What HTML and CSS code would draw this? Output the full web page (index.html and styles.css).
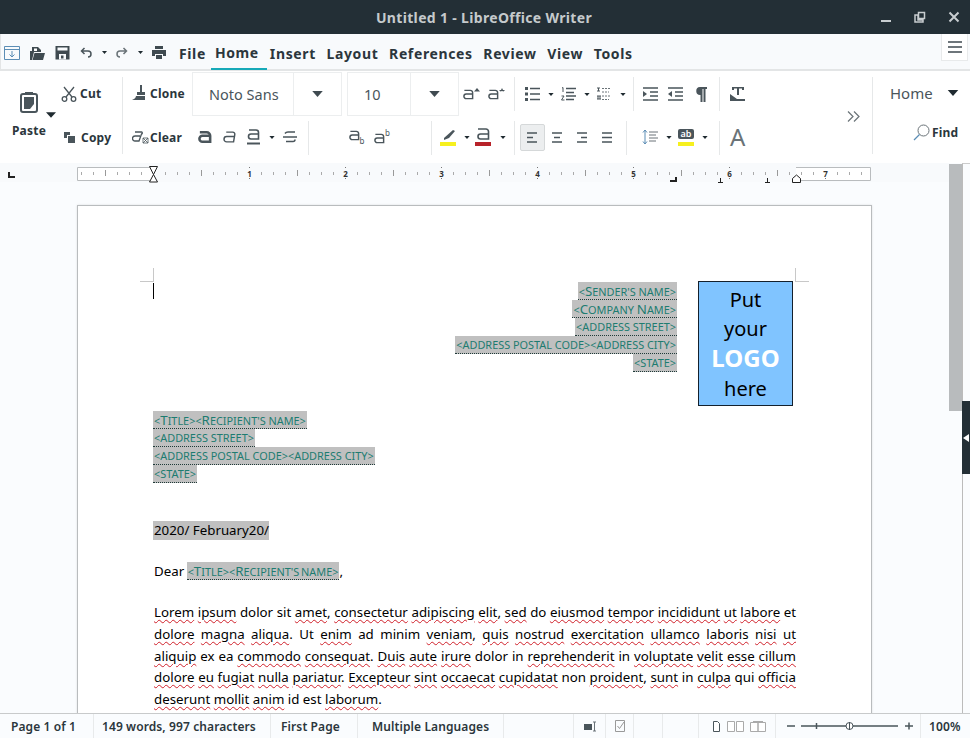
FILE: index.html
```
<!DOCTYPE html>
<html lang="en">
<head>
<meta charset="utf-8">
<title>Untitled 1 - LibreOffice Writer</title>
<link rel="stylesheet" href="styles.css">
</head>
<body>
<svg class="defs" width="0" height="0" aria-hidden="true">
  <symbol id="caret" viewBox="0 0 7 4"><path d="M0 0h7L3.500 4z"/></symbol>
  <symbol id="a" viewBox="0 0 12 12"><path d="M1.500 1.500H8A2.500 2.500 0 0 1 10.500 4v6.500H3.500a2.500 2.500 0 0 1 0-5h7" fill="none" stroke="#4a555b" stroke-width="1.600"/></symbol>
</svg>

<header class="titlebar">
  <div class="title">Untitled 1 - LibreOffice Writer</div>
  <div class="winbtns">
    <svg width="12" height="12" viewBox="0 0 12 12"><path d="M1 10h10" stroke="#c8cdd0" stroke-width="2"/></svg>
    <svg width="12" height="12" viewBox="0 0 12 12"><path d="M1 4h3v5h5v2H1z M4.500 1.500h6v6h-6z" fill="none" stroke="#c8cdd0" stroke-width="1.500"/></svg>
    <svg width="12" height="12" viewBox="0 0 12 12"><path d="M1.500 1.500l9 9M10.500 1.500l-9 9" stroke="#c8cdd0" stroke-width="2"/></svg>
  </div>
</header>

<nav class="menubar">
  <div class="quick">
    <svg class="q1" width="16" height="14" viewBox="0 0 16 14"><path d="M.5.500h15v13H.5z" fill="none" stroke="#5b8db5"/><path d="M.5 3.500h15M8 5v6M5.500 8.500L8 11l2.500-2.500" fill="none" stroke="#5b8db5"/></svg>
    <svg class="q2" width="16" height="16" viewBox="0 0 16 16"><path d="M1 15V6h2V2h6l3 3v2H5l-2 8z" fill="#3f4a50"/><path d="M3.500 15l2-7H16l-2 7z" fill="#3f4a50"/><path d="M5 3.500h3V6H5z" fill="#fff"/></svg>
    <svg class="q3" width="15" height="15" viewBox="0 0 15 15"><path d="M.5 1h14v13.500H.5z" fill="#3f4a50"/><path d="M2.500 2.500h10v3h-10zM4 9h7v5.500H4z" fill="#f8fafc"/><path d="M6 10.500h2.500v3H6z" fill="#3f4a50"/></svg>
    <svg class="q4" width="12" height="11" viewBox="0 0 12 11"><path d="M4.500 1L1.500 4l3 3M2 4h6a3 3 0 0 1 0 6" fill="none" stroke="#4a555b" stroke-width="1.500"/></svg>
    <svg class="qc" width="5" height="3"><use href="#caret"/></svg>
    <svg class="q4" width="12" height="11" viewBox="0 0 12 11"><path d="M7.500 1l3 3-3 3M10 4H4a3 3 0 0 0 0 6" fill="none" stroke="#6a7378" stroke-width="1.500"/></svg>
    <svg class="qc" width="5" height="3"><use href="#caret"/></svg>
    <svg class="q5" width="14" height="13" viewBox="0 0 14 13"><path d="M3 0h8v3H3zM0 4h14v6h-3V8H3v2H0zM4 9h6v4H4z" fill="#3f4a50"/></svg>
  </div>
  <ul class="menu">
    <li>File</li><li class="active">Home</li><li>Insert</li><li>Layout</li><li>References</li><li>Review</li><li>View</li><li>Tools</li>
  </ul>
  <div class="burger"><svg width="14" height="12" viewBox="0 0 14 12"><path d="M0 1h14M0 6h14M0 11h14" stroke="#3f4a50" stroke-width="1.500"/></svg></div>
</nav>

<section class="ribbon">
  <div class="paste">
    <svg width="18" height="22" viewBox="0 0 18 22"><rect x="1" y="3" width="16" height="18" rx="2" fill="none" stroke="#4a555b" stroke-width="2"/><path d="M5 1h8v3H5z" fill="#4a555b"/><path d="M4 6h10v7l-4 5H4z" fill="#4a555b"/></svg>
    <span class="plabel">Paste</span>
    <svg class="pcaret" width="10" height="6"><use href="#caret"/></svg>
  </div>
  <div class="clip">
    <div class="tl cut"><svg width="16" height="16" viewBox="0 0 16 16"><path d="M3 1l8 10M13 1L5 11" stroke="#4a555b" stroke-width="1.300" fill="none"/><circle cx="3.500" cy="13" r="2.300" fill="none" stroke="#4a555b" stroke-width="1.300"/><circle cx="12.500" cy="13" r="2.300" fill="none" stroke="#4a555b" stroke-width="1.300"/></svg><b>Cut</b></div>
    <div class="tl copy"><svg width="13" height="13" viewBox="0 0 13 13"><path d="M1 1h6v3H4v3H1z" fill="#4a555b"/><path d="M5 5h7v7H5z" fill="#4a555b"/></svg><b>Copy</b></div>
  </div>
  <div class="main">
    <div class="row top">
      <div class="tl clone"><svg width="16" height="16" viewBox="0 0 16 16"><path d="M8 0h2v7h3v3H5V7h3zM4 11h9v4H0c2-1 4-2 4-4z" fill="#4a555b"/></svg><b>Clone</b></div>
      <div class="combo font"><span class="val">Noto Sans</span><span class="drop"><svg width="11" height="6"><use href="#caret"/></svg></span></div>
      <div class="combo size"><span class="val">10</span><span class="drop"><svg width="11" height="6"><use href="#caret"/></svg></span></div>
      <div class="ics grow">
        <svg width="17" height="12" viewBox="0 0 17 12"><use href="#a" width="11" height="11" y="1"/><path d="M14 0l3 3.500h-6z" fill="#4a555b"/></svg>
        <svg width="17" height="12" viewBox="0 0 17 12"><use href="#a" width="11" height="11" y="1"/><path d="M14 0l1 2h2l-1.500 1.500L14 3l-1.500.5L11 2h2z" fill="#4a555b"/></svg>
      </div>
      <div class="ics lists">
        <svg width="15" height="14" viewBox="0 0 15 14"><path d="M0 0h3v3H0zM0 5.500h3v3H0zM0 11h3v3H0z" fill="#4a555b"/><path d="M5 1.500h10M5 7h10M5 12.500h10" stroke="#4a555b" stroke-width="1.500"/></svg>
        <svg class="c" width="6" height="3"><use href="#caret"/></svg>
        <svg width="15" height="14" viewBox="0 0 15 14"><path d="M5 1.500h10M5 5.500h8M5 9h10M5 12.500h8" stroke="#4a555b" stroke-width="1.500"/><path d="M1 1l1-.5V5M.5 9h2.500l-2.500 4h3" fill="none" stroke="#4a555b"/></svg>
        <svg class="c" width="6" height="3"><use href="#caret"/></svg>
        <svg width="15" height="14" viewBox="0 0 15 14"><path d="M5 1.500h9M5 5h7M5 9h9M5 12.500h7" stroke="#6a7378" stroke-dasharray="2 1"/><path d="M0 1h3M1.500 1v3M0 4h3M0 9h4M1 9v3M3 9v3M0 12h4" fill="none" stroke="#4a555b"/></svg>
        <svg class="c" width="6" height="3"><use href="#caret"/></svg>
      </div>
      <div class="ics indent">
        <svg width="15" height="14" viewBox="0 0 15 14"><path d="M0 1h15M7 5h8M7 9h8M0 13h15" stroke="#4a555b" stroke-width="1.500"/><path d="M0 4l4 3-4 3z" fill="#4a555b"/></svg>
        <svg width="15" height="14" viewBox="0 0 15 14"><path d="M0 1h15M7 5h8M7 9h8M0 13h15" stroke="#4a555b" stroke-width="1.500"/><path d="M4 4L0 7l4 3z" fill="#4a555b"/></svg>
        <svg class="pil" width="12" height="15" viewBox="0 0 12 15"><path d="M5 0h7v2h-1.500v13H8.500V2H7.500v13H5.500V8A4 4 0 0 1 5 0z" fill="#4a555b"/></svg>
      </div>
      <div class="ics one">
        <svg width="15" height="14" viewBox="0 0 15 14"><path d="M2 0h12v3h-2V1.500H9V8H7V1.500H4V3H2zM0 7l7 5h8v2H0z" fill="#4a555b"/></svg>
      </div>
    </div>
    <div class="row bot">
      <div class="tl clear"><svg width="17" height="14" viewBox="0 0 17 14"><path d="M3 2h6a1 1 0 0 1 .500 2L7 11H3a2.500 2.500 0 0 1 0-5h5" fill="none" stroke="#4a555b" stroke-width="1.300"/><path d="M11 8h5v5h-5zM11 8l5 5M16 8l-5 5" fill="none" stroke="#4a555b" stroke-width=".8"/></svg><b>Clear</b></div>
      <div class="ics fmt">
        <svg width="14" height="12" viewBox="0 0 16 14"><path d="M2 1.500h8a4 4 0 0 1 4 4v7H5a3.500 3.500 0 0 1 0-7h9" fill="none" stroke="#4a555b" stroke-width="3"/></svg>
        <svg width="13" height="12" viewBox="0 0 16 14"><path d="M4 1h8a2.500 2.500 0 0 1 2.500 3L13 13H4.500a3 3 0 0 1 0-6.500h9.500" fill="none" stroke="#4a555b" stroke-width="1.800"/></svg>
        <svg width="13" height="16" viewBox="0 0 13 16"><path d="M2 1h7a2.500 2.500 0 0 1 2.500 2.500V10H4a2.500 2.500 0 0 1 0-5h7.500" fill="none" stroke="#4a555b" stroke-width="1.600"/><path d="M0 14.500h13" stroke="#4a555b" stroke-width="2"/></svg>
        <svg class="c" width="6" height="3"><use href="#caret"/></svg>
        <svg width="14" height="12" viewBox="0 0 14 12"><path d="M2 2.500Q3 1 5 1h7M3 10.500h7q2 0 2-2M0 6h14" fill="none" stroke="#4a555b" stroke-width="1.500"/></svg>
      </div>
      <div class="ics script">
        <svg class="vis" width="16" height="16" viewBox="0 0 16 16"><use href="#a" width="11" height="11" y="1"/><text x="10.500" y="15" class="mini">b</text></svg>
        <svg class="vis" width="16" height="16" viewBox="0 0 16 16"><use href="#a" width="11" height="11" y="4"/><text x="11" y="7" class="mini">b</text></svg>
      </div>
      <div class="ics color">
        <svg width="16" height="18" viewBox="0 0 16 18"><path d="M4 10L13 2l2 1-6 7-5 2z" fill="#4a555b"/><path d="M0 14h16v4H0z" fill="#f6f01e"/></svg>
        <svg class="c" width="6" height="3"><use href="#caret"/></svg>
        <svg width="16" height="18" viewBox="0 0 16 18"><path d="M3 1h8a2.500 2.500 0 0 1 2.500 2.500V11H5.500a2.500 2.500 0 0 1 0-5h8" fill="none" stroke="#4a555b" stroke-width="1.600"/><path d="M0 14h16v4H0z" fill="#b8232a"/></svg>
        <svg class="c" width="6" height="3"><use href="#caret"/></svg>
      </div>
      <div class="ics align">
        <span class="al on"><svg width="11" height="11" viewBox="0 0 11 11"><path d="M0 1h10M0 5.500h6M0 10h10" stroke="#4a555b" stroke-width="1.500"/></svg></span>
        <span class="al"><svg width="11" height="11" viewBox="0 0 11 11"><path d="M0 1h10M2 5.500h6M0 10h10" stroke="#4a555b" stroke-width="1.500"/></svg></span>
        <span class="al"><svg width="11" height="11" viewBox="0 0 11 11"><path d="M0 1h10M4 5.500h6M0 10h10" stroke="#4a555b" stroke-width="1.500"/></svg></span>
        <span class="al"><svg width="11" height="11" viewBox="0 0 11 11"><path d="M0 1h10M0 5.500h10M0 10h10" stroke="#4a555b" stroke-width="1.500"/></svg></span>
      </div>
      <div class="ics space">
        <svg width="16" height="16" viewBox="0 0 16 16"><path d="M3 1v14M1 3.500L3 1l2 2.500M1 12.500L3 15l2-2.500" fill="none" stroke="#5b8db5"/><path d="M7 3h9M7 6h7M7 9h9M7 12h7" stroke="#6a7378"/></svg>
        <svg class="c" width="6" height="3"><use href="#caret"/></svg>
        <svg class="vis" width="16" height="17" viewBox="0 0 16 17"><rect width="16" height="10" rx="2" fill="#4a555b"/><text x="8" y="8" class="abt">ab</text><path d="M0 13h16v4H0z" fill="#f6f01e"/></svg>
        <svg class="c" width="6" height="3"><use href="#caret"/></svg>
      </div>
      <div class="ics big"><span class="biga">A</span></div>
    </div>
    <div class="more"><svg width="13" height="11" viewBox="0 0 13 11"><path d="M1 .500l5 5-5 5M7 .500l5 5-5 5" fill="none" stroke="#6a7378" stroke-width="1.200"/></svg></div>
  </div>
  <div class="side">
    <div class="home"><span>Home</span><svg width="12" height="6"><use href="#caret"/></svg></div>
    <div class="find"><svg width="17" height="17" viewBox="0 0 17 17"><circle cx="10.500" cy="6.500" r="5.500" fill="none" stroke="#6a7378"/><path d="M6.500 10.500L1 16" stroke="#5b8db5" stroke-width="1.300"/></svg><b>Find</b></div>
  </div>
</section>

<main class="workspace">
  <div class="left">
    <div class="rulerbar">
      <svg class="corner" width="7" height="6" viewBox="0 0 7 6"><path d="M1 0v5h6" fill="none" stroke="#222" stroke-width="2"/></svg>
      <svg class="ruler" width="794" height="19" viewBox="0 0 794 19">
        <defs>
          <pattern id="tk" x="76" y="0" width="96" height="19" patternUnits="userSpaceOnUse">
            <path d="M12.500 9v3M24.500 9v3M36.500 9v3M60.500 9v3M72.500 9v3M84.500 9v3" stroke="#aaa"/>
            <path d="M48.500 7v6" stroke="#999"/>
            <path d="M.5 4v1M.5 15v1" stroke="#777"/>
          </pattern>
        </defs>
        <rect x="0" y="4" width="794" height="14" fill="#fff"/>
        <rect x="76" y="4" width="643" height="14" fill="#f8fafc"/>
        <rect x="0" y="0" width="794" height="19" fill="url(#tk)"/>
        <path d="M76 4.500H.5v13H76M719 4.500h74.500v13H719" fill="none" stroke="#b9bcbe"/>
        <g class="rn"><text x="172.500" y="14">1</text><text x="268.500" y="14">2</text><text x="364.500" y="14">3</text><text x="460.500" y="14">4</text><text x="556.500" y="14">5</text><text x="652.500" y="14">6</text><text x="748.500" y="14">7</text></g>
        <path d="M72.500 3.500h8L76.500 11.500l4 7.500h-8l4-7.500z" fill="#fff" stroke="#222"/>
        <path d="M599 14v4h-6" fill="none" stroke="#222" stroke-width="2"/>
        <path d="M643.500 15v4M641 19.500h5M690.500 15v4M688 19.500h5" fill="none" stroke="#222"/>
        <path d="M715.500 19.500v-4l4-3.500 4 3.500v4z" fill="#fff" stroke="#222"/>
      </svg>
    </div>
    <div class="pane">
      <article class="page">
        <i class="crop c1"></i><i class="crop c2"></i>
        <i class="cursor"></i>
        <div class="head">
          <div class="sender">
            <div><span class="fld">&lt;<em>S</em>ender's name&gt;</span></div>
            <div><span class="fld">&lt;<em>C</em>ompany <em>N</em>ame&gt;</span></div>
            <div><span class="fld">&lt;address street&gt;</span></div>
            <div><span class="fld">&lt;address postal code&gt;&lt;address city&gt;</span></div>
            <div><span class="fld">&lt;state&gt;</span></div>
          </div>
          <div class="logo">Put<br>your<br><b>LOGO</b><br>here</div>
        </div>
        <div class="recipient">
          <div><span class="fld">&lt;<em>T</em>itle&gt;&lt;<em>R</em>ecipient's name&gt;</span></div>
          <div><span class="fld">&lt;address street&gt;</span></div>
          <div><span class="fld">&lt;address postal code&gt;&lt;address city&gt;</span></div>
          <div><span class="fld">&lt;state&gt;</span></div>
        </div>
        <p class="date"><span class="shade">2020/ February20/</span></p>
        <p class="dear">Dear <span class="fld">&lt;<em>T</em>itle&gt;&lt;<em>R</em>ecipient's name&gt;</span>,</p>
        <div class="body-text">
          <div class="ln"><u>Lorem</u> <u>ipsum</u> dolor sit <u>amet</u>, <u>consectetur</u> <u>adipiscing</u> <u>elit</u>, <u>sed</u> do <u>eiusmod</u> <u>tempor</u> <u>incididunt</u> <u>ut</u> <u>labore</u> et</div>
          <div class="ln"><u>dolore</u> <u>magna</u> <u>aliqua</u>. Ut <u>enim</u> ad minim <u>veniam</u>, <u>quis</u> <u>nostrud</u> <u>exercitation</u> <u>ullamco</u> <u>laboris</u> <u>nisi</u> <u>ut</u></div>
          <div class="ln"><u>aliquip</u> ex ea <u>commodo</u> <u>consequat</u>. <u>Duis</u> <u>aute</u> <u>irure</u> dolor in <u>reprehenderit</u> in <u>voluptate</u> <u>velit</u> <u>esse</u> <u>cillum</u></div>
          <div class="ln"><u>dolore</u> <u>eu</u> <u>fugiat</u> <u>nulla</u> <u>pariatur</u>. <u>Excepteur</u> <u>sint</u> <u>occaecat</u> <u>cupidatat</u> non <u>proident</u>, <u>sunt</u> in <u>culpa</u> qui <u>officia</u></div>
          <div class="ln last"><u>deserunt</u> <u>mollit</u> <u>anim</u> id est <u>laborum</u>.</div>
        </div>
      </article>
    </div>
  </div>
  <div class="scroll"><div class="thumb"></div></div>
  <div class="sidebar"><div class="handle"><svg width="6" height="8" viewBox="0 0 6 8"><path d="M6 0v8L0 4z" fill="#fff"/></svg></div></div>
</main>

<footer class="status">
  <span class="s s1">Page 1 of 1</span>
  <span class="s s2">149 words, 997 characters</span>
  <span class="s s3">First Page</span>
  <span class="s s4">Multiple Languages</span>
  <span class="s s4b"></span>
  <span class="s s5"><svg width="13" height="11" viewBox="0 0 13 11"><path d="M0 3h8v6H0z" fill="#4a555b"/><path d="M9 1h3M10.500 1v9M9 10h3" stroke="#6a7378" fill="none"/></svg></span>
  <span class="s s6"><svg width="11" height="12" viewBox="0 0 11 12"><path d="M.5.500h9v11h-9z" fill="none" stroke="#999"/><path d="M2.500 6l2 2.500L9 2" fill="none" stroke="#999"/></svg></span>
  <span class="s s7"></span>
  <span class="s s7b"></span>
  <span class="s s8">
    <svg width="7" height="11" viewBox="0 0 7 11"><path d="M.5.500h4l2 2v8h-6z" fill="#fff" stroke="#4a555b"/></svg>
    <svg class="p2" width="17" height="11" viewBox="0 0 17 11"><path d="M.5.500h7v10h-7zM9.500.500h7v10h-7z" fill="#fff" stroke="#aaa"/></svg>
    <svg class="p3" width="16" height="11" viewBox="0 0 16 11"><path d="M.5 1.500h7.500v9H.5zM8 1.500h7.500v9H8zM3 .500h10" fill="#fff" stroke="#aaa"/></svg>
  </span>
  <span class="s s9">
    <svg width="126" height="12" viewBox="0 0 126 12"><path d="M0 6h8M14 6h97M118 6h8M122 2.500v7" stroke="#4a555b" stroke-width="1.500"/><path d="M29.500 3v6" stroke="#4a555b" stroke-width="1.500"/><circle cx="62.500" cy="6" r="3.500" fill="#fff" stroke="#4a555b"/><path d="M62.500 2v8" stroke="#4a555b"/></svg>
  </span>
  <span class="s s10">100%</span>
</footer>
</body>
</html>
```

FILE: styles.css
```
* { box-sizing: border-box; }
html, body { margin: 0; height: 100%; }
body {
  width: 970px; height: 738px; overflow: hidden;
  display: flex; flex-direction: column;
  font-family: "Noto Sans", sans-serif; color: #000; background: #fff;
}
.defs { position: absolute; }
svg { display: block; flex: none; fill: #1f2a30; }
svg.vis { overflow: visible; }

.titlebar {
  height: 34px; flex: none; background: #232f36;
  display: flex; align-items: center; position: relative;
}
.title { width: 100%; text-align: center; color: #c5cacc; font-weight: 700; font-size: 14px; letter-spacing: .33px; padding-right: 2px; }
.winbtns { position: absolute; right: 10px; top: 11px; display: flex; gap: 22px; }

.menubar {
  height: 37px; flex: none; background: #f8fafc; border-bottom: 2px solid #e3e5e6;
  display: flex; align-items: center; position: relative; border-left: 1px solid #e3e5e6;
}
.quick { display: flex; align-items: center; width: 178px; padding: 2px 0 0 3px; }
.q1 { margin-right: 9px; }
.q2 { margin-right: 10px; }
.q3 { margin-right: 10px; }
.q4 { margin-right: 10px; }
.qc { margin-right: 9px; }
.menu { list-style: none; display: flex; margin: 0; padding: 4px 0 0; height: 100%; color: #2b363c; font-weight: 700; font-size: 14px; letter-spacing: .62px; }
.menu li { display: flex; align-items: center; margin-right: 10.700px; }
.menu li:first-child { margin-right: 5px; }
.menu li.active { border-bottom: 2px solid #16a9b8; padding: 0 8px 0 4px; margin: -2px 3px -1px 0; }
.burger { position: absolute; right: 2px; top: 0; width: 27px; height: 27px; background: #fff; border: 1px solid #e8eaeb; border-top: 0; display: flex; align-items: center; justify-content: center; }

.ribbon { height: 92px; flex: none; background: #fff; display: flex; position: relative; color: #2b363c; }
.tl { display: flex; align-items: center; font-size: 12px; color: #2b363c; letter-spacing: .2px; }
.tl b { font-weight: 700; }
.paste { width: 53px; position: relative; display: flex; flex-direction: column; align-items: center; padding: 20px 0 0 5px; }
.plabel { font-size: 12px; font-weight: 700; margin-top: 9px; letter-spacing: .2px; }
.pcaret { position: absolute; right: -3px; top: 41px; }
.clip { width: 70px; display: flex; flex-direction: column; gap: 27px; margin: 6px 0 9px; padding: 8px 0 0 8px; border-right: 1px solid #e6e8e9; }
.cut { gap: 3px; }
.copy { gap: 5px; margin-left: 2px; }
.main { flex: 1; display: flex; flex-direction: column; position: relative; min-width: 0; padding-top: 1px; }
.row { display: flex; align-items: center; height: 44px; }
.ics { display: flex; align-items: center; flex: none; }
.clone { width: 69px; padding: 0 0 2px 9px; gap: 2px; flex: none; }
.combo { height: 44px; border: 1px solid #eceeef; display: flex; align-items: center; font-size: 14.500px; color: #4a555b; flex: none; }
.combo .val { padding-left: 16px; }
.combo .drop { height: 100%; border-left: 1px solid #eceeef; display: flex; align-items: center; justify-content: center; }
.combo .drop svg { fill: #3f4a50; }
.font { width: 150px; }
.font .val { width: 100px; }
.font .drop { width: 48px; }
.size { width: 112px; margin-left: 5px; }
.size .val { width: 62px; }
.size .drop { width: 48px; }
.grow { gap: 8px; padding-left: 4px; width: 55px; }
.lists { gap: 7.500px; width: 119px; padding-left: 10px; border-left: 1px solid #e6e8e9; height: 34px; }
.indent { gap: 10px; width: 86px; padding-left: 9px; border-left: 1px solid #e6e8e9; height: 34px; }
.pil { margin-left: 2px; }
.one { padding-left: 10px; border-left: 1px solid #e6e8e9; height: 34px; }
.bot .ics { padding-bottom: 2px; }
.clear { width: 60px; padding: 0 0 2px 9px; gap: 1px; flex: none; }
.fmt { gap: 11px; width: 126px; padding-left: 15px; border-right: 1px solid #e6e8e9; height: 34px; }
.fmt .c { margin: 0 -3px 0 -2px; }
.script { gap: 9px; width: 123px; padding-left: 40px; border-right: 1px solid #e6e8e9; height: 34px; }
.color { gap: 8px; width: 83px; padding-left: 8px; height: 34px; border-right: 1px solid #e6e8e9; }
.color .c { margin-right: -3px; }
.color .c:last-child { margin: 0 0 0 1px; }
.align { width: 112px; padding-left: 5px; border-right: 1px solid #e6e8e9; height: 34px; }
.al { width: 25px; height: 27px; display: flex; align-items: center; justify-content: center; }
.al.on { background: #eceeef; border: 1px solid #d5d8d9; border-radius: 2px; }
.space { gap: 8px; width: 93px; padding-left: 15px; border-right: 1px solid #e6e8e9; height: 34px; }
.space svg:nth-child(2) { margin-right: -2px; }
.big { padding-left: 10px; height: 34px; }
.biga { font-size: 24px; color: #6a7378; line-height: 1; }
.mini { font: 8px "Noto Sans", sans-serif; fill: #4a555b; }
.abt { font: 600 9px "Noto Sans", sans-serif; fill: #fff; text-anchor: middle; }
.more { position: absolute; left: 724px; top: 40px; }
.side { width: 98px; flex: none; border-left: 1px solid #e6e8e9; margin: 6px 0 9px; padding-left: 17px; display: flex; flex-direction: column; }
.home { display: flex; align-items: center; gap: 14px; font-size: 15px; color: #4a555b; height: 32px; }
.find { display: flex; align-items: center; gap: 2px; font-size: 12px; margin: 15px 0 0 23px; letter-spacing: .2px; }
.find b { font-weight: 700; }

.workspace { flex: 1; display: flex; background: #fafcfe; min-height: 0; position: relative; }
.left { width: 949px; flex: none; display: flex; flex-direction: column; min-height: 0; }
.rulerbar { height: 19px; flex: none; background: #f8fafc; position: relative; }
.corner { position: absolute; left: 8px; top: 9px; }
.ruler { margin-left: 77px; overflow: visible; }
.rn text { font: 700 8px "Noto Sans", sans-serif; fill: #333; text-anchor: middle; }

.pane { flex: 1; min-height: 0; overflow: hidden; padding: 23px 0 0 77px; }
.page { width: 795px; height: 600px; background: #fff; border: 1px solid #b9bcbe; box-shadow: 0 0 2px rgba(0,0,0,.12); padding: 75px 75px 0; position: relative; }
.crop { position: absolute; display: block; width: 14px; height: 14px; top: 62px; }
.c1 { left: 62px; border-right: 1px solid #c8c8c8; border-bottom: 1px solid #c8c8c8; }
.c2 { right: 62px; border-left: 1px solid #c8c8c8; border-bottom: 1px solid #c8c8c8; }
.cursor { position: absolute; left: 75px; top: 77px; width: 1px; height: 16px; background: #000; }
.head { display: flex; height: 130px; }
.sender { width: 524px; text-align: right; padding-top: 1px; }
.sender div, .recipient div { height: 18px; line-height: 18px; }
.fld {
  text-transform: uppercase; font-size: 10.900px; color: #1d7c70; background: #c0c0c0;
  display: inline-block; vertical-align: top; height: 18px; line-height: 18px; border-bottom: 1px dotted #1f3a38;
  padding: 0 1px;
}
.fld em { font-style: normal; font-size: 13.300px; }
.logo { margin-left: 21px; width: 95px; height: 125px; flex: none; background: #80c4ff; border: 1px solid #14202c; text-align: center; font-size: 20px; line-height: 29px; padding-top: 3px; color: #000; }
.logo b { color: #fff; font-size: 24px; font-weight: 700; }
.date { margin: 38px 0 0; font-size: 13.300px; line-height: 19px; height: 19px; }
.shade { background: #c0c0c0; display: inline-block; padding-left: 1px; }
.dear { margin: 22px 0 0; font-size: 13.300px; line-height: 19px; height: 19px; padding-left: 1px; word-spacing: -1px; }
.body-text { margin-top: 21px; margin-left: 1px; width: 642px; font-size: 13.300px; line-height: 21.800px; }
.ln { text-align: justify; text-align-last: justify; height: 21.800px; white-space: nowrap; }
.ln.last { text-align-last: left; }
.ln u { text-decoration: underline wavy #d0202a; text-decoration-thickness: 1px; text-underline-offset: 2px; }

.scroll { width: 13px; flex: none; }
.thumb { width: 13px; height: 247px; background: #b8bbbd; margin-top: 1px; }
.sidebar { flex: 1; border-left: 1px solid #bbb; border-top: 1px solid #ccc; position: relative; }
.handle { position: absolute; left: -1px; top: 237px; width: 9px; height: 73px; background: #232f36; display: flex; align-items: center; padding-left: 1px; }

.status { height: 25px; flex: none; background: #fafcfe; border-top: 1px solid #c8cacb; display: flex; align-items: center; font-size: 12px; font-weight: 600; letter-spacing: .1px; color: #2b363c; position: relative; }
.s { height: 100%; display: flex; align-items: center; border-right: 1px solid #e8eaeb; flex: none; }
.s1 { width: 94px; padding-left: 11px; }
.s2 { width: 177px; padding-left: 8px; }
.s3 { width: 87px; padding-left: 10px; }
.s4 { width: 146px; padding-left: 14px; }
.s4b { width: 70px; }
.s5 { width: 32px; padding-left: 10px; }
.s6 { width: 28px; padding-left: 9px; }
.s7 { width: 29px; }
.s7b { width: 36px; }
.s8 { width: 77px; padding-left: 14px; }
.p2 { margin-left: 7px; }
.p3 { margin-left: 6px; }
.s9 { width: 145px; padding-left: 11px; }
.s10 { border: 0; padding-left: 8px; }
```
